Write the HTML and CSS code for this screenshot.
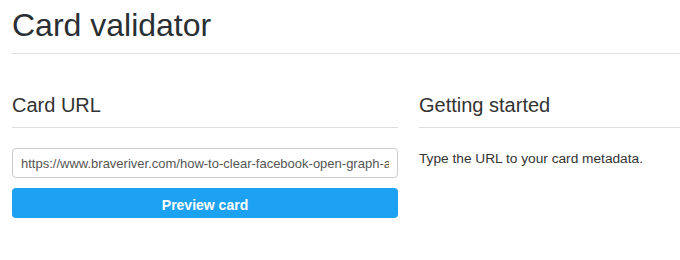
FILE: index.html
```html
<!DOCTYPE html>
<html>
<head>
<meta charset="utf-8">
<link rel="stylesheet" href="styles.css">
</head>
<body>
<div class="page">
  <h1 class="title">Card validator</h1>
  <div class="columns">
    <section class="col">
      <h2 class="col-heading">Card URL</h2>
      <input class="url-input" type="text" value="https://www.braveriver.com/how-to-clear-facebook-open-graph-and-twitter-card-cache/">
      <button class="preview-btn">Preview card</button>
    </section>
    <section class="col">
      <h2 class="col-heading">Getting started</h2>
      <p class="hint">Type the URL to your card metadata.</p>
    </section>
  </div>
</div>
</body>
</html>
```
FILE: styles.css
```css
html, body {
  margin: 0;
  padding: 0;
  background: #fff;
  overflow: hidden;
}
body {
  font-family: "Liberation Sans", Arial, sans-serif;
  color: #333;
}
.page {
  width: 793px;
  padding-left: 12px;
}
.title {
  margin: 0;
  padding: 8px 0 10px;
  font-size: 32px;
  line-height: 1.1;
  font-weight: normal;
  color: #292f33;
  border-bottom: 1px solid #ddd;
}
.columns {
  display: flex;
  gap: 21px;
  margin-top: 40px;
}
.col {
  width: 386px;
  flex: none;
}
.col-heading {
  margin: 0;
  padding-bottom: 11px;
  font-size: 20px;
  line-height: 22px;
  font-weight: normal;
  color: #333;
  border-bottom: 1px solid #ddd;
}
.url-input {
  display: block;
  box-sizing: border-box;
  width: 100%;
  margin: 20px 0 0;
  height: 30px;
  padding: 0 8px;
  border: 1px solid #ccc;
  border-radius: 4px;
  font-family: "Liberation Sans", Arial, sans-serif;
  font-size: 13px;
  color: #555;
  background: #fff;
  outline: none;
}
.preview-btn {
  display: block;
  box-sizing: border-box;
  width: 100%;
  height: 30px;
  margin-top: 10px;
  border: 0;
  border-radius: 4px;
  background: #1da1f2;
  color: #fff;
  font-family: "Liberation Sans", Arial, sans-serif;
  font-size: 14px;
  font-weight: bold;
  padding: 3px 0 0;
}
.hint {
  margin: 22px 0 0;
  font-size: 13.7px;
  line-height: 18px;
  color: #333;
}
```
